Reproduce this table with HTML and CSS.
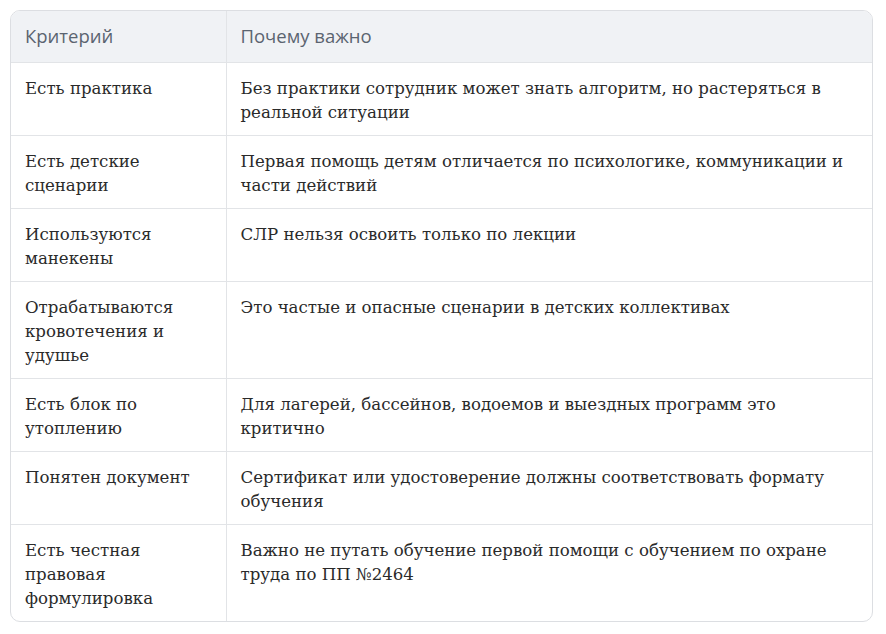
FILE: index.html
```html
<!DOCTYPE html>
<html lang="ru">
<head>
<meta charset="utf-8">
<link rel="stylesheet" href="styles.css">
</head>
<body>
<div class="wrap">
<table class="crit">
<colgroup><col class="c1"><col class="c2"></colgroup>
<thead>
<tr><th>Критерий</th><th>Почему важно</th></tr>
</thead>
<tbody>
<tr><td>Есть практика</td><td>Без практики сотрудник может знать алгоритм, но растеряться в реальной ситуации</td></tr>
<tr><td>Есть детские сценарии</td><td>Первая помощь детям отличается по психологике, коммуникации и части действий</td></tr>
<tr><td>Используются манекены</td><td>СЛР нельзя освоить только по лекции</td></tr>
<tr><td>Отрабатываются кровотечения и удушье</td><td>Это частые и опасные сценарии в детских коллективах</td></tr>
<tr><td>Есть блок по утоплению</td><td>Для лагерей, бассейнов, водоемов и выездных программ это критично</td></tr>
<tr><td>Понятен документ</td><td>Сертификат или удостоверение должны соответствовать формату обучения</td></tr>
<tr><td>Есть честная правовая формулировка</td><td>Важно не путать обучение первой помощи с обучением по охране труда по ПП №2464</td></tr>
</tbody>
</table>
</div>
</body>
</html>
```
FILE: styles.css
```css
html, body { margin: 0; padding: 0; background: #fff; }
.wrap {
  margin: 10px 13px 0 10px;
  border: 1px solid #dcdee2;
  border-radius: 10px;
  overflow: hidden;
}
.crit {
  width: 100%;
  border-collapse: collapse;
  table-layout: fixed;
  font-family: "DejaVu Serif", serif;
  font-size: 16.6px;
  line-height: 24px;
  color: #2a2a2a;
}
.c1 { width: 215px; }
.crit th {
  background: #f0f2f5;
  font-family: "Open Sans", "Noto Sans", sans-serif;
  font-weight: 400;
  font-size: 18.5px;
  color: #5b6470;
  text-align: left;
  padding: 13px 15px 14px 14px;
  height: 24px;
}
.crit td {
  vertical-align: top;
  padding: 14px 15px 10px 14px;
}
.crit th, .crit td {
  border-bottom: 1px solid #e2e4e7;
  border-right: 1px solid #e2e4e7;
}
.crit th:last-child, .crit td:last-child { border-right: none; }
.crit tbody tr:last-child td { border-bottom: none; }
```
